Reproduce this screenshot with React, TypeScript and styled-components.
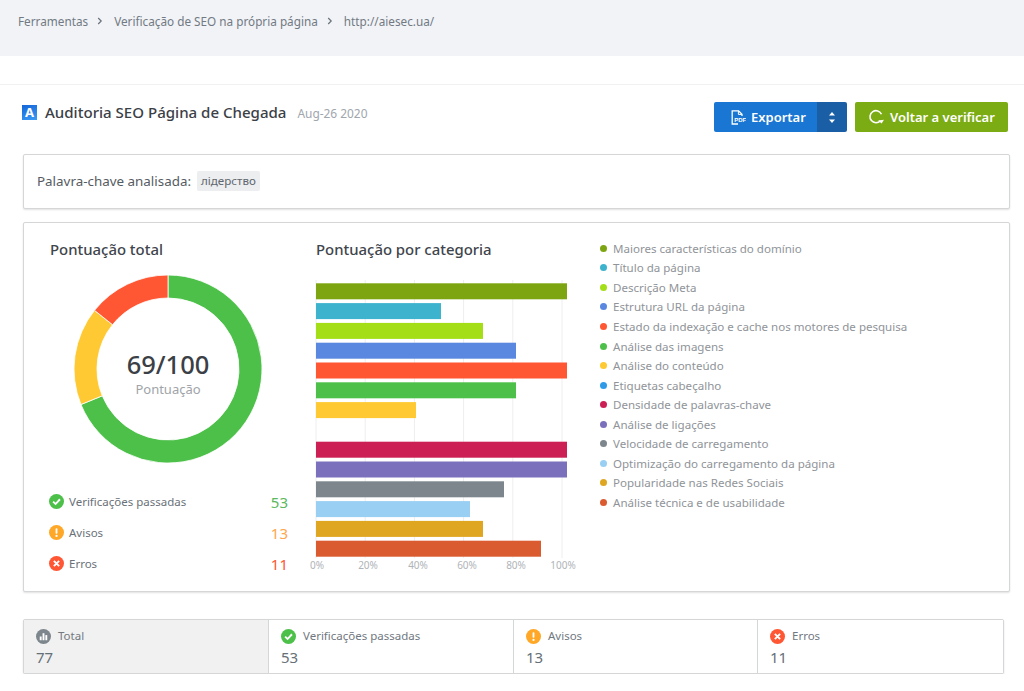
import React from 'react'
import styled, { createGlobalStyle } from 'styled-components'

const GlobalStyle = createGlobalStyle`
  html, body {
    margin: 0;
    padding: 0;
    background: #fff;
    overflow: hidden;
  }
  body {
    font-family: 'Noto Sans', 'Open Sans', sans-serif;
    color: #3f454c;
  }
  * {
    box-sizing: border-box;
  }
`

const Breadcrumbs = styled.nav`
  display: flex;
  align-items: flex-start;
  height: 56px;
  padding: 13px 0 0 18px;
  background: #f1f3f7;
  font-size: 11.75px;
  line-height: 16px;
  color: #717a83;
`
const Crumb = styled.span`
  white-space: nowrap;
`
const CrumbSep = styled.span`
  display: flex;
  width: 26px;
  height: 16px;
  align-items: center;
  justify-content: flex-start;
  padding-left: 9px;
`
const TopSpacer = styled.div`
  height: 29px;
  border-bottom: 1px solid #f0f1f3;
`
const Main = styled.main`
  padding: 17px 14px 0 23px;
`
const TitleRow = styled.header`
  display: flex;
  align-items: flex-start;
  height: 52px;
`
const LogoBox = styled.span`
  display: flex;
  align-items: center;
  justify-content: center;
  width: 15px;
  height: 15px;
  margin: 3px 8px 0 -1px;
  background: linear-gradient(160deg, #1565d8, #3a9cf5);
  color: #fff;
  font-size: 13px;
  font-weight: 700;
  line-height: 15px;
`
const Title = styled.h1`
  margin: -1px 0 0;
  font-size: 15.05px;
  line-height: 22px;
  font-weight: 500;
  color: #3b4046;
  white-space: nowrap;
`
const DateText = styled.span`
  margin: 1px 0 0 11px;
  font-size: 11.9px;
  line-height: 20px;
  color: #a0a6ad;
`
const Actions = styled.div`
  display: flex;
  gap: 8px;
  margin-left: auto;
  margin-right: 2px;
`
const ExportGroup = styled.div`
  display: flex;
  height: 30px;
  border-radius: 2px;
  overflow: hidden;
`
const BlueButton = styled.button`
  display: flex;
  align-items: center;
  gap: 5px;
  width: 103px;
  padding: 0 0 0 15px;
  border: none;
  background: #1976d2;
  color: #fff;
  font: 600 13px 'Noto Sans', sans-serif;
`
const CaretButton = styled.button`
  display: flex;
  align-items: center;
  justify-content: center;
  width: 30px;
  padding: 0;
  border: none;
  background: #1a5ea6;
`
const GreenButton = styled.button`
  display: flex;
  align-items: center;
  gap: 6px;
  width: 153px;
  height: 30px;
  padding: 0 0 0 13px;
  border: none;
  border-radius: 2px;
  background: #7cac14;
  color: #fff;
  font: 600 13px 'Noto Sans', sans-serif;
  white-space: nowrap;
`
const PdfLabel = styled.text`
  font-family: 'Liberation Sans', sans-serif;
  font-size: 6px;
  font-weight: 700;
  fill: #fff;
`
const Card = styled.section`
  border: 1px solid #d5d6d8;
  border-radius: 2px;
  box-shadow: 0 1px 2px rgba(0, 0, 0, 0.12);
  background: #fff;
`
const KeywordCard = styled(Card)`
  display: flex;
  align-items: center;
  gap: 6px;
  height: 55px;
  padding: 0 13px 2px;
  font-size: 13.4px;
  color: #555b62;
`
const KeywordTag = styled.span`
  padding: 0 4px;
  height: 20px;
  border-radius: 2px;
  background: #eceef0;
  font-size: 11.6px;
  line-height: 20px;
  color: #60666d;
`
const ScoreCard = styled(Card)`
  display: grid;
  grid-template-columns: 266px 284px 1fr;
  height: 370px;
  margin-top: 13px;
  padding: 15px 0 0 26px;
`
const SectionTitle = styled.h2`
  margin: 0;
  font-size: 14.9px;
  line-height: 22px;
  font-weight: 500;
  color: #3f454c;
  white-space: nowrap;
`
const TotalColumn = styled.div`
  display: flex;
  flex-direction: column;
`
const DonutWrap = styled.div`
  position: relative;
  width: 190px;
  height: 190px;
  margin: 14px 0 0 23px;
`
const DonutCenter = styled.div`
  position: absolute;
  inset: 0;
  display: flex;
  flex-direction: column;
  align-items: center;
  justify-content: center;
  padding-top: 7px;
`
const DonutValue = styled.div`
  font-size: 25.5px;
  line-height: 32px;
  font-weight: 500;
  color: #3b4046;
`
const DonutLabel = styled.div`
  font-size: 13px;
  line-height: 18px;
  color: #a0a4a9;
`
const SummaryList = styled.ul`
  list-style: none;
  margin: 22px 0 0;
  padding: 0;
`
const SummaryRow = styled.li`
  display: flex;
  align-items: center;
  gap: 5px;
  width: 239px;
  height: 31px;
  margin-left: -1px;
  font-size: 11.5px;
  color: #6a7178;
`
const SummaryCount = styled.span<{ $color: string }>`
  margin-left: auto;
  font-size: 15px;
  color: ${(p) => p.$color};
`
const ChartColumn = styled.div`
  display: flex;
  flex-direction: column;
`
const ChartSvg = styled.svg`
  display: block;
  margin: 20px 0 0 -1px;
  overflow: visible;
`
const AxisText = styled.text`
  font-family: 'Noto Sans', sans-serif;
  font-size: 10px;
  fill: #b0b4b8;
`
const Legend = styled.ul`
  list-style: none;
  margin: 0;
  padding: 0.5px 0 0;
`
const LegendRow = styled.li`
  display: flex;
  align-items: center;
  gap: 6px;
  height: 19.55px;
  font-size: 11.55px;
  color: #909499;
  white-space: nowrap;
`
const LegendDot = styled.span<{ $color: string }>`
  width: 7px;
  height: 7px;
  border-radius: 50%;
  background: ${(p) => p.$color};
`
const StatsBar = styled(Card)`
  display: grid;
  grid-template-columns: 245px 245px 244px 1fr;
  height: 55px;
  margin: 27px 6px 0 0;
`
const StatCell = styled.div<{ $active?: boolean }>`
  padding: 8px 0 0 12px;
  border-right: 1px solid #d5d6d8;
  background: ${(p) => (p.$active ? '#f1f1f1' : '#fff')};
  &:last-child {
    border-right: none;
  }
`
const StatLabel = styled.div`
  display: flex;
  align-items: center;
  gap: 7px;
  font-size: 11.5px;
  line-height: 16px;
  color: #71787f;
`
const StatValue = styled.div`
  margin-top: 3px;
  font-size: 15px;
  line-height: 20px;
  color: #667077;
`

const CategoryData = [
  { name: 'Maiores características do domínio', color: '#7ca511', width: 251 },
  { name: 'Título da página', color: '#3eb3ce', width: 125 },
  { name: 'Descrição Meta', color: '#a3de17', width: 167 },
  { name: 'Estrutura URL da página', color: '#5a87df', width: 200 },
  { name: 'Estado da indexação e cache nos motores de pesquisa', color: '#ff5733', width: 251 },
  { name: 'Análise das imagens', color: '#4dc04a', width: 200 },
  { name: 'Análise do conteúdo', color: '#ffc933', width: 100 },
  { name: 'Etiquetas cabeçalho', color: '#2f9be8', width: 0 },
  { name: 'Densidade de palavras-chave', color: '#cc2055', width: 251 },
  { name: 'Análise de ligações', color: '#7b70bb', width: 251 },
  { name: 'Velocidade de carregamento', color: '#7c868c', width: 188 },
  { name: 'Optimização do carregamento da página', color: '#98cff2', width: 154 },
  { name: 'Popularidade nas Redes Sociais', color: '#dfa621', width: 167 },
  { name: 'Análise técnica e de usabilidade', color: '#da5b30', width: 225 },
]

const AxisTicks = [
  { label: '0%', x: 2 },
  { label: '20%', x: 53 },
  { label: '40%', x: 103 },
  { label: '60%', x: 152 },
  { label: '80%', x: 201 },
  { label: '100%', x: 248 },
]

const polar = (r: number, deg: number) => {
  const a = ((deg - 90) * Math.PI) / 180
  return `${95 + r * Math.cos(a)} ${95 + r * Math.sin(a)}`
}

const arcPath = (from: number, to: number) => {
  const large = to - from > 180 ? 1 : 0
  return `M${polar(94, from)} A94 94 0 ${large} 1 ${polar(94, to)} L${polar(71, to)} A71 71 0 ${large} 0 ${polar(71, from)} Z`
}

const Donut = () => (
  <svg width="190" height="190" viewBox="0 0 190 190">
    <path d={arcPath(0, 247.8)} fill="#4dc04a" stroke="#fff" strokeWidth="0.8" />
    <path d={arcPath(247.8, 308.6)} fill="#ffc933" stroke="#fff" strokeWidth="0.8" />
    <path d={arcPath(308.6, 360)} fill="#ff5733" stroke="#fff" strokeWidth="0.8" />
  </svg>
)

const BarChart = () => (
  <ChartSvg width="270" height="296" viewBox="0 0 270 296">
    {[0, 49.2, 98.4, 147.6, 196.8, 246].map((x) => (
      <line key={x} x1={x + 1} x2={x + 1} y1="0" y2="278" stroke="#eeeeee" strokeWidth="1" />
    ))}
    {CategoryData.map((c, i) =>
      c.width > 0 ? (
        <rect key={c.name} x="1" y={3.3 + i * 19.8} width={c.width} height="16" fill={c.color} />
      ) : null,
    )}
    {AxisTicks.map((t) => (
      <AxisText key={t.label} x={t.x} y="289" textAnchor="middle">
        {t.label}
      </AxisText>
    ))}
  </ChartSvg>
)

const StatusIcon: React.FC<{ kind: 'ok' | 'warn' | 'error' | 'total'; size?: number }> = ({ kind, size = 15 }) => {
  const fill = { ok: '#4dc04a', warn: '#ffa726', error: '#ff5733', total: '#7c868c' }[kind]
  return (
    <svg width={size} height={size} viewBox="0 0 16 16" style={{ flex: 'none' }}>
      <circle cx="8" cy="8" r="8" fill={fill} />
      {kind === 'ok' && <path d="M4.4 8.2 7 10.7 11.7 5.6" fill="none" stroke="#fff" strokeWidth="2" />}
      {kind === 'warn' && (
        <>
          <rect x="7" y="3.4" width="2" height="6" rx="0.8" fill="#fff" />
          <circle cx="8" cy="11.6" r="1.2" fill="#fff" />
        </>
      )}
      {kind === 'error' && <path d="M5.2 5.2 10.8 10.8M10.8 5.2 5.2 10.8" fill="none" stroke="#fff" strokeWidth="2" />}
      {kind === 'total' && (
        <>
          <rect x="4" y="8" width="2" height="4" fill="#fff" />
          <rect x="7" y="4.5" width="2" height="7.5" fill="#fff" />
          <rect x="10" y="6.5" width="2" height="5.5" fill="#fff" />
        </>
      )}
    </svg>
  )
}

const CrumbChevron = () => (
  <CrumbSep>
    <svg width="6" height="8" viewBox="0 0 6 8">
      <path d="M1.2 1 4.2 4 1.2 7" fill="none" stroke="#6a737c" strokeWidth="1.2" />
    </svg>
  </CrumbSep>
)

const PdfIcon = () => (
  <svg width="17" height="17" viewBox="0 0 17 17">
    <path d="M9 15H3.2V1.8H9.6L13 5.2V7" fill="none" stroke="#fff" strokeWidth="1.3" />
    <path d="M9.4 1.8V5.4H13" fill="none" stroke="#fff" strokeWidth="1" />
    <PdfLabel x="5.2" y="13.4">
      PDF
    </PdfLabel>
  </svg>
)

const App: React.FC = () => (
  <>
    <GlobalStyle />
    <Breadcrumbs>
      <Crumb>Ferramentas</Crumb>
      <CrumbChevron />
      <Crumb>Verificação de SEO na própria página</Crumb>
      <CrumbChevron />
      <Crumb>http://aiesec.ua/</Crumb>
    </Breadcrumbs>
    <TopSpacer />
    <Main>
      <TitleRow>
        <LogoBox>A</LogoBox>
        <Title>Auditoria SEO Página de Chegada</Title>
        <DateText>Aug-26 2020</DateText>
        <Actions>
          <ExportGroup>
            <BlueButton>
              <PdfIcon />
              Exportar
            </BlueButton>
            <CaretButton aria-label="Mais opções">
              <svg width="6" height="11" viewBox="0 0 6 11">
                <path d="M3 0 6 3.6H0ZM3 11 0 7.4H6Z" fill="#fff" />
              </svg>
            </CaretButton>
          </ExportGroup>
          <GreenButton>
            <svg width="16" height="16" viewBox="0 0 16 16">
              <path d="M13.6 9.5A6 6 0 1 1 11.8 3.2" fill="none" stroke="#fff" strokeWidth="1.6" transform="rotate(25 8 8)" />
              <path d="M10.2 11.4 13.6 14.6 16 10.8Z" fill="#fff" />
            </svg>
            Voltar a verificar
          </GreenButton>
        </Actions>
      </TitleRow>
      <KeywordCard>
        Palavra-chave analisada:
        <KeywordTag>лідерство</KeywordTag>
      </KeywordCard>
      <ScoreCard>
        <TotalColumn>
          <SectionTitle>Pontuação total</SectionTitle>
          <DonutWrap>
            <Donut />
            <DonutCenter>
              <DonutValue>69/100</DonutValue>
              <DonutLabel>Pontuação</DonutLabel>
            </DonutCenter>
          </DonutWrap>
          <SummaryList>
            <SummaryRow>
              <StatusIcon kind="ok" />
              Verificações passadas
              <SummaryCount $color="#5cb85c">53</SummaryCount>
            </SummaryRow>
            <SummaryRow>
              <StatusIcon kind="warn" />
              Avisos
              <SummaryCount $color="#ffa64d">13</SummaryCount>
            </SummaryRow>
            <SummaryRow>
              <StatusIcon kind="error" />
              Erros
              <SummaryCount $color="#ff5733">11</SummaryCount>
            </SummaryRow>
          </SummaryList>
        </TotalColumn>
        <ChartColumn>
          <SectionTitle>Pontuação por categoria</SectionTitle>
          <BarChart />
        </ChartColumn>
        <Legend>
          {CategoryData.map((c) => (
            <LegendRow key={c.name}>
              <LegendDot $color={c.color} />
              {c.name}
            </LegendRow>
          ))}
        </Legend>
      </ScoreCard>
      <StatsBar>
        <StatCell $active>
          <StatLabel>
            <StatusIcon kind="total" />
            Total
          </StatLabel>
          <StatValue>77</StatValue>
        </StatCell>
        <StatCell>
          <StatLabel>
            <StatusIcon kind="ok" />
            Verificações passadas
          </StatLabel>
          <StatValue>53</StatValue>
        </StatCell>
        <StatCell>
          <StatLabel>
            <StatusIcon kind="warn" />
            Avisos
          </StatLabel>
          <StatValue>13</StatValue>
        </StatCell>
        <StatCell>
          <StatLabel>
            <StatusIcon kind="error" />
            Erros
          </StatLabel>
          <StatValue>11</StatValue>
        </StatCell>
      </StatsBar>
    </Main>
  </>
)

export default App
